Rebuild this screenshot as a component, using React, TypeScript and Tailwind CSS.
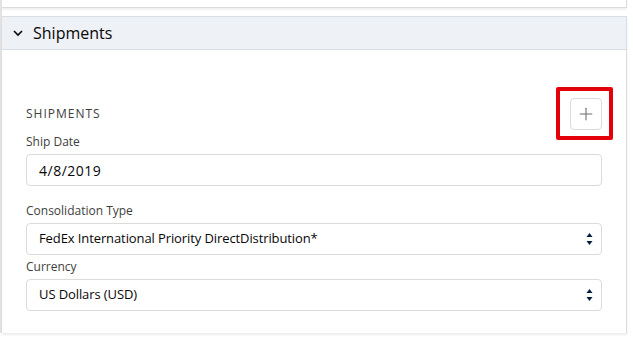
import { Plus } from "lucide-react";

const fields = [
  { label: "Ship Date", value: "4/8/2019", select: false, gap: "mt-[3px]", text: "text-[14px] tracking-[0.5px]" },
  {
    label: "Consolidation Type",
    value: "FedEx International Priority DirectDistribution*",
    select: true,
    gap: "mt-4",
    text: "text-[13px] tracking-[-0.1px]",
  },
  { label: "Currency", value: "US Dollars (USD)", select: true, gap: "mt-[3px]", text: "text-[13px] tracking-[-0.1px]" },
];

function SelectArrows() {
  return (
    <svg width="7" height="14" viewBox="0 0 7 14" className="absolute right-[8px] top-1/2 -translate-y-1/2">
      <path d="M3.5 1 L6.5 5 L0.5 5 Z" fill="#061c3f" />
      <path d="M3.5 13 L6.5 9 L0.5 9 Z" fill="#061c3f" />
    </svg>
  );
}

export default function App() {
  return (
    <div className="h-[340px] w-[633px] overflow-hidden bg-white font-['Open_Sans','Liberation_Sans',sans-serif]">
      <div className="w-[627px] border-l-2 border-[#e3e3e3]">
        {/* previous card, cut off at the top */}
        <div className="h-2 border-b border-r border-[#dcdcdc] bg-white shadow-[0_2px_2px_rgba(0,0,0,0.06)]" />

        <section className="mt-2 border-r border-t border-[#d8dde6] bg-white shadow-[0_2px_2px_rgba(0,0,0,0.08)]">
          <div className="flex h-[33px] items-center border-b border-[#d8dde6] bg-[#eef1f6] pl-[10px]">
            <svg width="12" height="12" viewBox="0 0 12 12" className="mr-[9px]">
              <path d="M2 4 L6 8 L10 4" fill="none" stroke="#080707" strokeWidth="1.6" />
            </svg>
            <span className="text-[16px] leading-none text-[#080707]">Shipments</span>
          </div>

          <div className="px-6 pb-[22px] pt-12">
            <div className="flex h-8 items-center justify-between">
              <span className="text-[12px] uppercase tracking-[1px] text-[#3e3e3c]">Shipments</span>
              <div className="relative">
                <button className="flex h-8 w-8 items-center justify-center rounded border border-[#dddbda] bg-white">
                  <Plus size={20} strokeWidth={1.3} color="#706e6b" />
                </button>
                <div className="pointer-events-none absolute left-[-14px] top-[-11px] h-[53px] w-[57px] rounded-[2px] border-4 border-[#e3000b]" />
              </div>
            </div>

            {fields.map((f) => (
              <div key={f.label} className={f.gap}>
                <div className="mb-[3px] text-[12px] leading-[18px] text-[#3e3e3c]">{f.label}</div>
                <div className={`relative flex h-8 items-center rounded border border-[#dddbda] bg-white pl-3 text-[#080707] ${f.text}`}>
                  {f.value}
                  {f.select && <SelectArrows />}
                </div>
              </div>
            ))}
          </div>
        </section>
      </div>
    </div>
  );
}
